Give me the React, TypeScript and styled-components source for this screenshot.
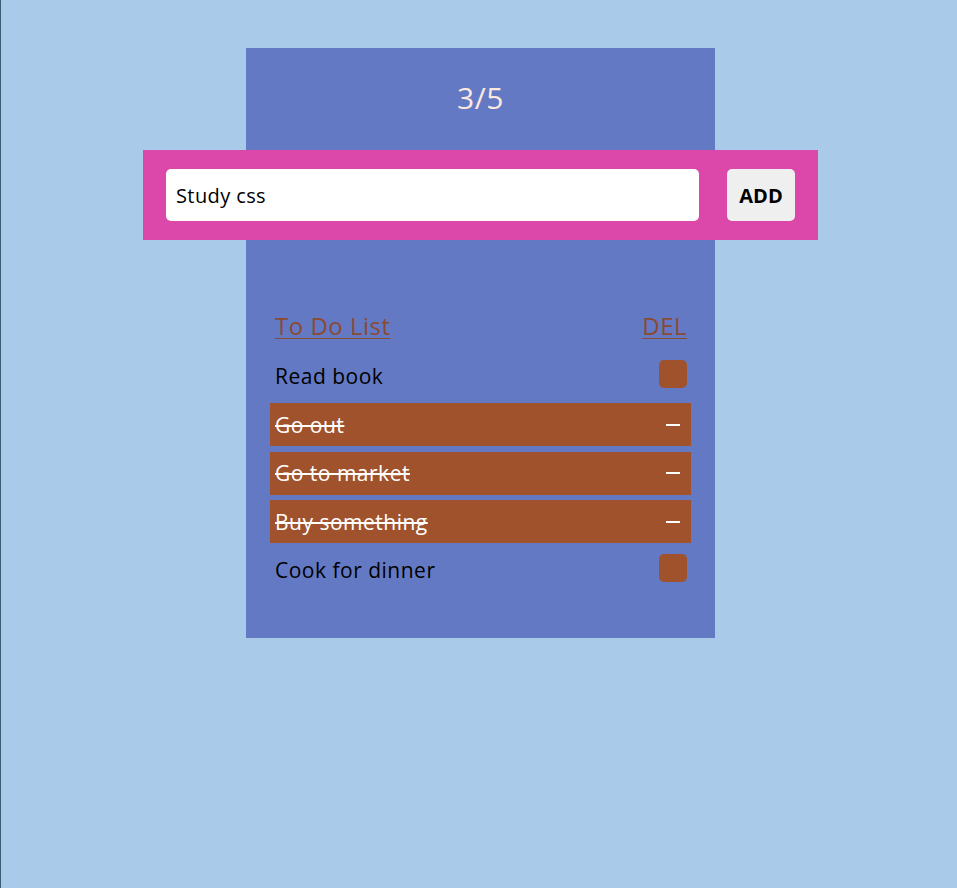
import React, { useState } from "react";
import styled, { createGlobalStyle } from "styled-components";

const Global = createGlobalStyle`
  html, body { margin: 0; padding: 0; }
  body {
    background: #a9cbe9;
    font-family: "Open Sans", "Liberation Sans", sans-serif;
    min-height: 888px;
    border-left: 1px solid #3d5a72;
  }
`;

const Page = styled.div`
  display: flex;
  justify-content: center;
  padding: 48px 0 0 3px;
`;

const Card = styled.div`
  width: 469px;
  background: #6479c4;
  display: flex;
  flex-direction: column;
  align-items: center;
  padding: 28px 0 46.5px;
  box-sizing: border-box;
`;

const Counter = styled.h1`
  margin: 0;
  font-size: 30px;
  font-weight: 400;
  line-height: 44px;
  letter-spacing: 0.5px;
  color: #fbe9df;
`;

const Form = styled.form`
  width: 675px;
  flex-shrink: 0;
  margin-top: 30px;
  background: #db48aa;
  box-sizing: border-box;
  padding: 19px 23px;
  display: flex;
  align-items: center;
  gap: 28px;
`;

const Input = styled.input`
  flex: 1;
  height: 52px;
  border: none;
  border-radius: 5px;
  background: #fff;
  padding: 0 10px;
  font-family: inherit;
  font-size: 20px;
  letter-spacing: 0.4px;
  color: #000;
  outline: none;
  box-sizing: border-box;
`;

const AddButton = styled.button`
  width: 68px;
  height: 52px;
  border: none;
  border-radius: 5px;
  background: #efefef;
  font-family: inherit;
  font-size: 20px;
  font-weight: 700;
  color: #000;
  padding: 0;
`;

const List = styled.div`
  align-self: stretch;
  margin-top: 67px;
  padding: 0 24px;
  display: flex;
  flex-direction: column;
  gap: 5.5px;
`;

const Header = styled.div`
  display: flex;
  justify-content: space-between;
  align-items: center;
  padding: 0 4px 0 5px;
  height: 36px;
  margin-bottom: 6px;
`;

const HeaderLink = styled.span`
  font-size: 24px;
  letter-spacing: 0.5px;
  color: #8a4a33;
  text-decoration: underline;
  text-underline-offset: 3px;
  text-decoration-thickness: 1px;
`;

const Row = styled.div<{ $done: boolean }>`
  height: 43px;
  display: flex;
  justify-content: space-between;
  align-items: center;
  padding: 0 4px 0 5px;
  background: ${(p) => (p.$done ? "#a0522d" : "transparent")};
  color: ${(p) => (p.$done ? "#fff" : "#000")};
`;

const ItemText = styled.span<{ $done: boolean }>`
  font-size: 21px;
  letter-spacing: 0.5px;
  text-decoration: ${(p) => (p.$done ? "line-through" : "none")};
  text-decoration-thickness: 2px;
`;

const Check = styled.span`
  width: 28px;
  height: 28px;
  border-radius: 5px;
  background: #a0522d;
  margin-bottom: 4px;
`;

const Dash = styled.span`
  width: 14px;
  height: 2px;
  background: #fff;
  margin-right: 7px;
`;

const items = [
  { text: "Read book", done: false },
  { text: "Go out", done: true },
  { text: "Go to market", done: true },
  { text: "Buy something", done: true },
  { text: "Cook for dinner", done: false },
];

export default function App() {
  const [value, setValue] = useState("Study css");
  const doneCount = items.filter((i) => i.done).length;
  return (
    <>
      <Global />
      <Page>
        <Card>
          <Counter>
            {doneCount}/{items.length}
          </Counter>
          <Form onSubmit={(e) => e.preventDefault()}>
            <Input value={value} onChange={(e) => setValue(e.target.value)} />
            <AddButton type="submit">ADD</AddButton>
          </Form>
          <List>
            <Header>
              <HeaderLink>To Do List</HeaderLink>
              <HeaderLink>DEL</HeaderLink>
            </Header>
            {items.map((it) => (
              <Row key={it.text} $done={it.done}>
                <ItemText $done={it.done}>{it.text}</ItemText>
                {it.done ? <Dash /> : <Check />}
              </Row>
            ))}
          </List>
        </Card>
      </Page>
    </>
  );
}
